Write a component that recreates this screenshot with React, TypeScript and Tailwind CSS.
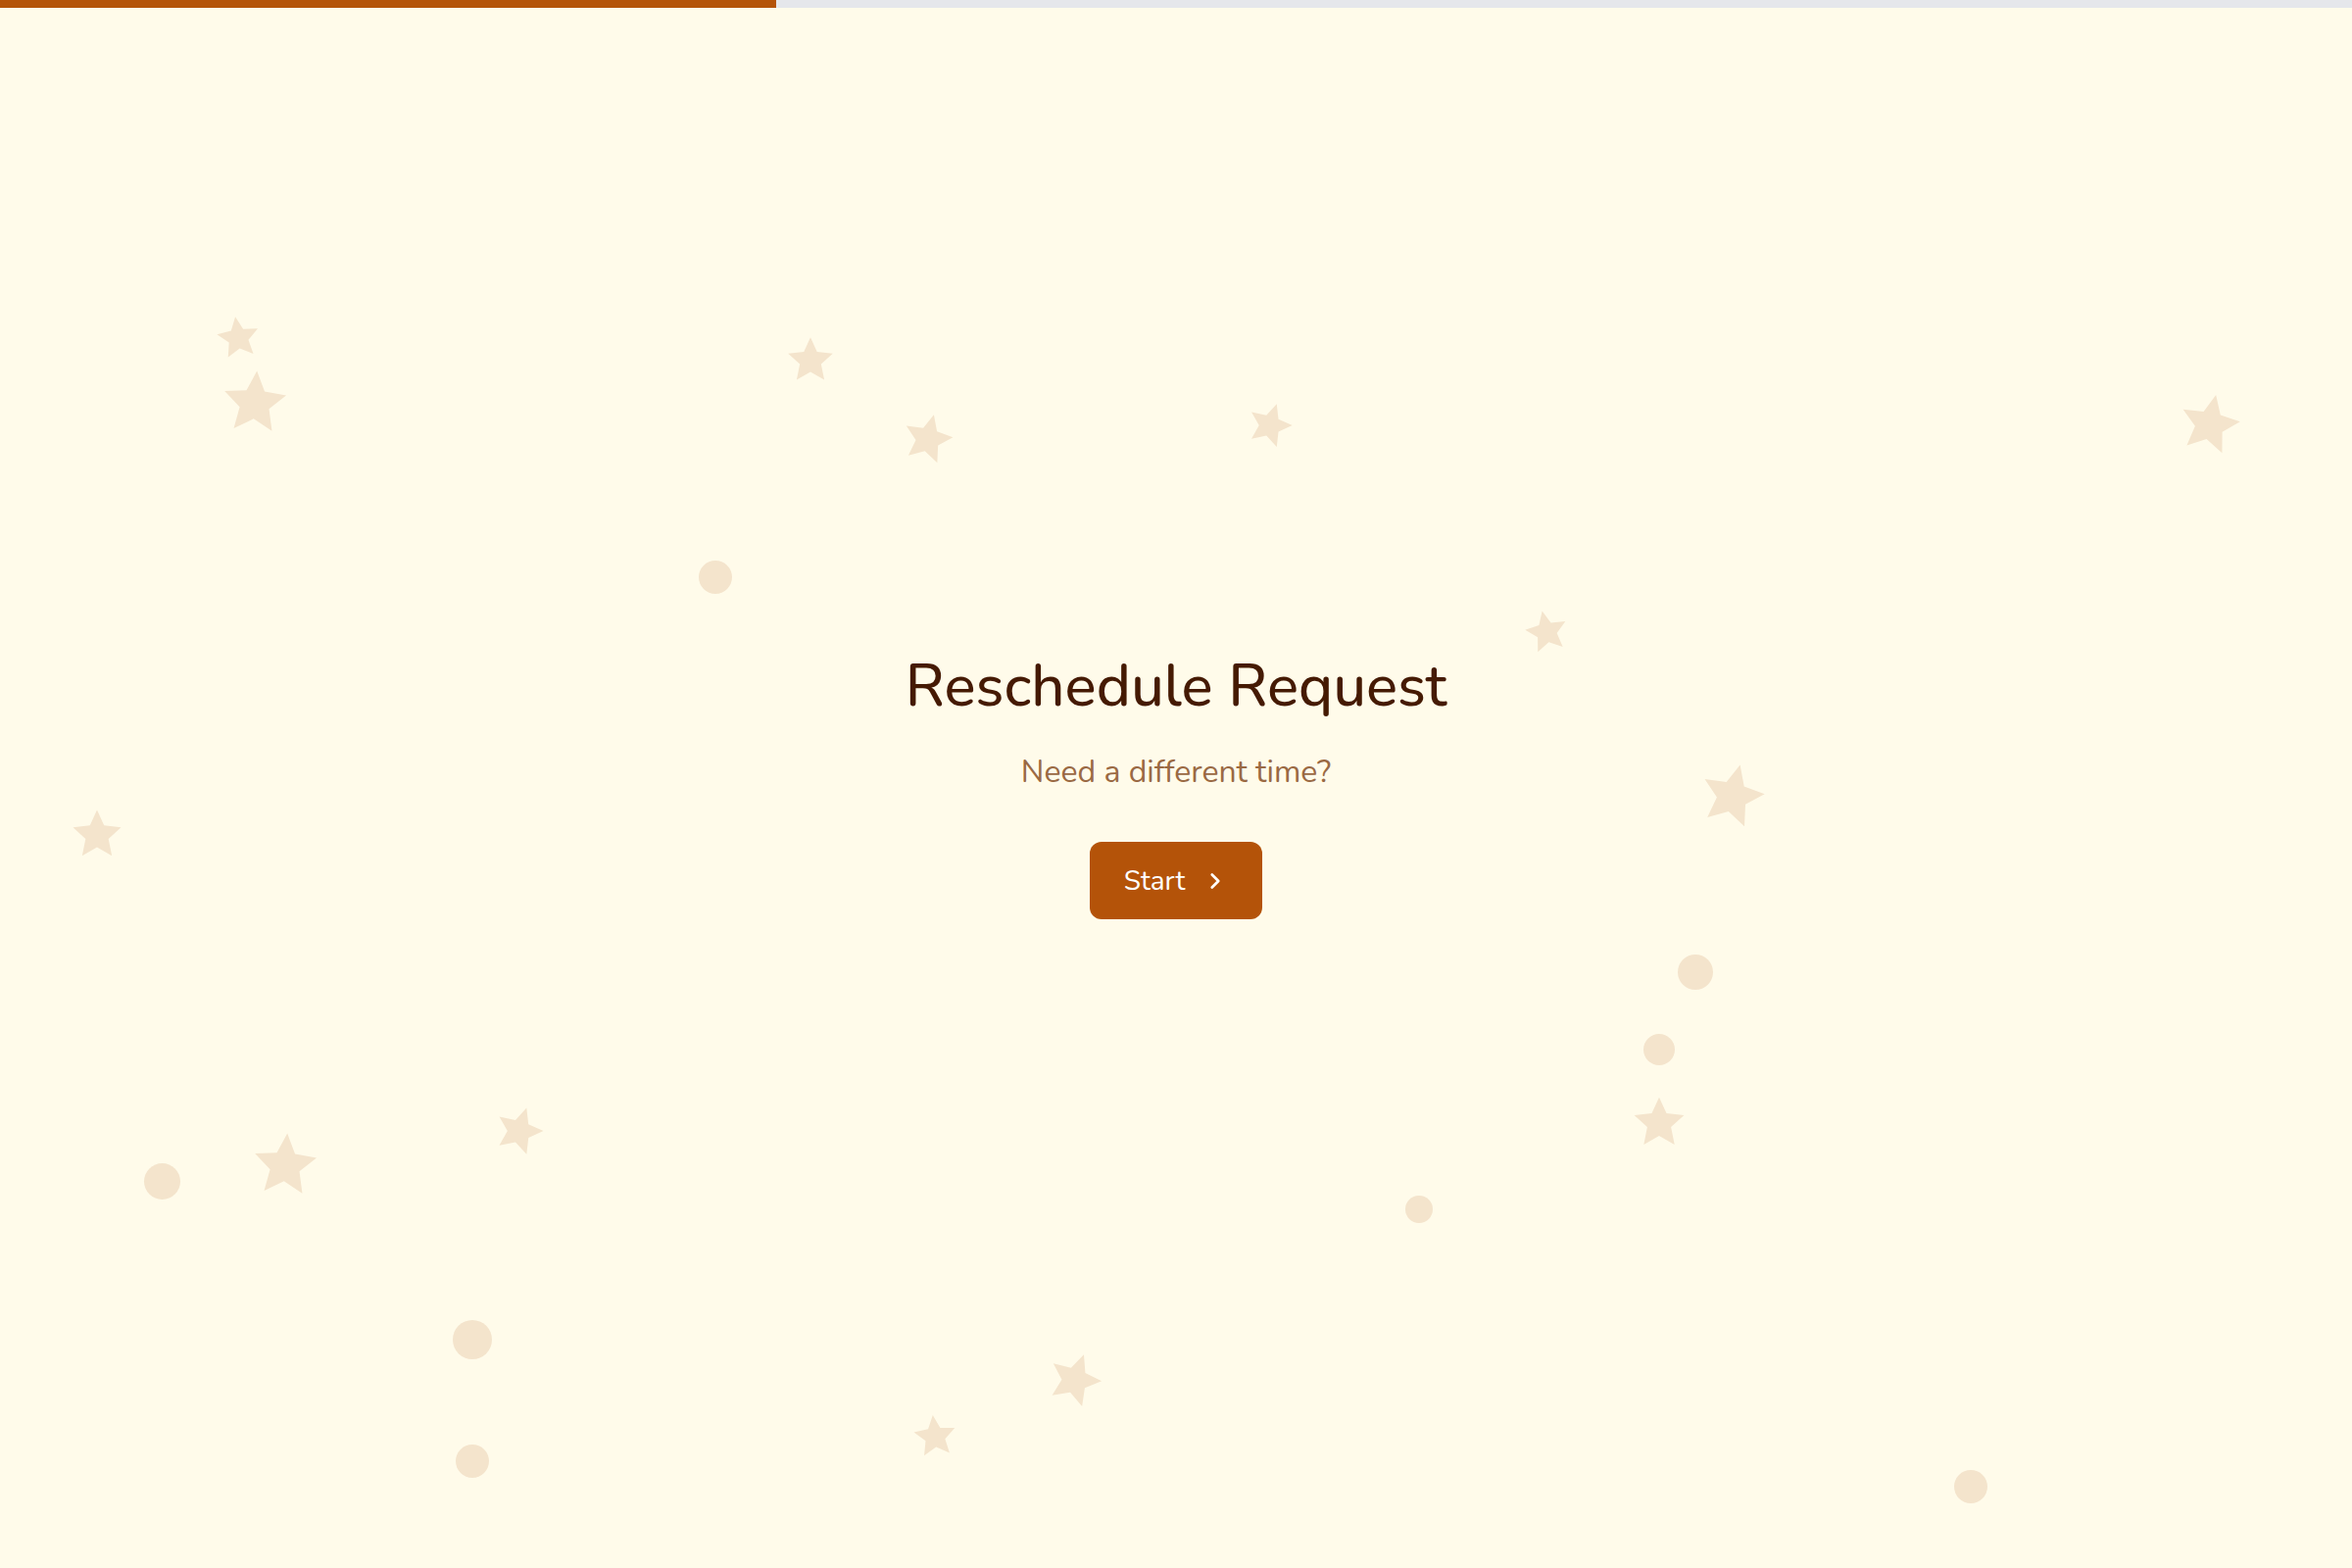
import React from "react";
import { ChevronRight } from "lucide-react";

type Deco = { kind: "star" | "dot"; x: number; y: number; s: number; r?: number };

// Scattered background decorations (center x/y and size in px)
const decos: Deco[] = [
  { kind: "star", x: 243, y: 344, s: 48, r: -8 },
  { kind: "star", x: 260, y: 410, s: 72, r: 4 },
  { kind: "star", x: 827, y: 367, s: 52, r: 0 },
  { kind: "star", x: 947, y: 447, s: 56, r: 14 },
  { kind: "star", x: 1296, y: 433, s: 50, r: 18 },
  { kind: "star", x: 2255, y: 432, s: 68, r: 12 },
  { kind: "star", x: 1578, y: 644, s: 48, r: -12 },
  { kind: "star", x: 1768, y: 811, s: 72, r: 14 },
  { kind: "star", x: 99, y: 851, s: 56, r: 0 },
  { kind: "star", x: 530, y: 1153, s: 54, r: 18 },
  { kind: "star", x: 291, y: 1188, s: 72, r: 4 },
  { kind: "star", x: 1693, y: 1145, s: 58, r: 0 },
  { kind: "star", x: 1097, y: 1407, s: 60, r: 20 },
  { kind: "star", x: 954, y: 1465, s: 48, r: -6 },
  { kind: "dot", x: 730, y: 589, s: 34 },
  { kind: "dot", x: 165, y: 1205, s: 37 },
  { kind: "dot", x: 482, y: 1367, s: 40 },
  { kind: "dot", x: 482, y: 1491, s: 34 },
  { kind: "dot", x: 1448, y: 1234, s: 28 },
  { kind: "dot", x: 1730, y: 992, s: 36 },
  { kind: "dot", x: 1693, y: 1071, s: 32 },
  { kind: "dot", x: 2011, y: 1517, s: 34 },
];

function Star({ size }: { size: number }) {
  return (
    <svg width={size} height={size} viewBox="0 0 24 24">
      <polygon
        points="12,1.5 15.1,8.3 22.5,9.1 17,14.1 18.5,21.5 12,17.8 5.5,21.5 7,14.1 1.5,9.1 8.9,8.3"
        fill="#f4e4cc"
      />
    </svg>
  );
}

export default function App() {
  return (
    <div
      className="min-h-screen w-full bg-[#fffbea] overflow-hidden"
      style={{ fontFamily: '"Nunito", "Lato", "Noto Sans", sans-serif' }}
    >
      <div className="h-2 w-full bg-[#e5e7eb]">
        <div className="h-full w-[33%] bg-[#b45309]" />
      </div>

      <div className="relative h-[1592px] w-full">
        {decos.map((d, i) => (
          <div
            key={i}
            className="absolute"
            style={{
              left: d.x - d.s / 2,
              top: d.y - 8 - d.s / 2,
              width: d.s,
              height: d.s,
              transform: d.r ? `rotate(${d.r}deg)` : undefined,
            }}
          >
            {d.kind === "star" ? (
              <Star size={d.s} />
            ) : (
              <div className="h-full w-full rounded-full bg-[#f4e4cc]" />
            )}
          </div>
        ))}

        <div className="relative flex h-full flex-col items-center justify-center pb-[6px]">
          <h1 className="text-[60px] leading-[72px] font-medium text-[#451a03]">
            Reschedule Request
          </h1>
          <p className="mt-[31px] text-[32px] leading-[42px] text-[#9a6943]">
            Need a different time?
          </p>
          <button className="mt-[50px] flex h-[79px] w-[176px] items-center justify-center gap-[18px] rounded-[12px] bg-[#b45309] text-[28px] text-white">
            <span>Start</span>
            <ChevronRight size={26} strokeWidth={2.5} />
          </button>
        </div>
      </div>
    </div>
  );
}
